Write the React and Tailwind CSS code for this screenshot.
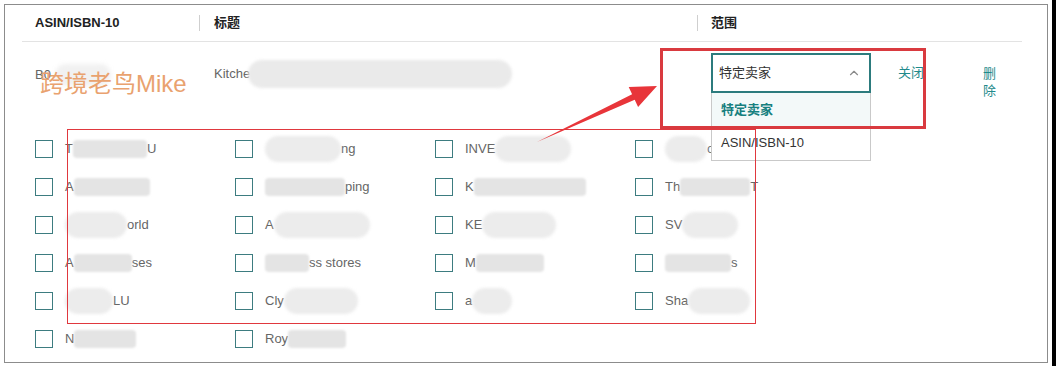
import { FiChevronUp } from 'react-icons/fi';

const FONT = "font-['Liberation_Sans','Noto_Sans_CJK_SC',sans-serif]";

// each cell: strings are visible text, numbers are smudged (blurred) widths, {w, r} = rounded smudge
const SELLERS = [
  ['T', 74, 'U'], [{ w: 76, r: true }, 'ng'], ['INVE', { w: 76, r: true }], [{ w: 42, r: true }, 'o'],
  ['A', 76], [80, 'ping'], ['K', 112], ['Th', 70, 'T'],
  [{ w: 62, r: true }, 'orld'], ['A', { w: 96, r: true }], ['KE', { w: 74, r: true }], ['SV', { w: 56, r: true }],
  ['A', 58, 'ses'], [44, 'ss stores'], ['M', 68], [66, 's'],
  [{ w: 48, r: true }, 'LU'], ['Cly', { w: 74, r: true }], ['a', { w: 40, r: true }], ['Sha', { w: 62, r: true }],
  ['N', 62], ['Roy', 58],
];

function Smudge({ w, round }) {
  return (
    <span
      className={
        round
          ? 'inline-block h-[26px] rounded-full bg-[#ececec] blur-[1.5px]'
          : 'inline-block h-[18px] rounded-sm bg-[#e4e4e4] blur-[1px]'
      }
      style={{ width: w }}
    />
  );
}

function SellerCell({ parts }) {
  return (
    <div className="flex items-center">
      <span className="w-[18px] h-[18px] border border-[#3d7c80] shrink-0" />
      <span className="ml-3 flex items-center text-[13px] text-[#666] whitespace-nowrap">
        {parts.map((p, i) =>
          typeof p === 'string' ? (
            <span key={i}>{p}</span>
          ) : typeof p === 'number' ? (
            <Smudge key={i} w={p} />
          ) : (
            <Smudge key={i} w={p.w} round={p.r} />
          )
        )}
      </span>
    </div>
  );
}

export default function App() {
  return (
    <div className={`relative w-[1056px] h-[366px] bg-black flex ${FONT}`}>
      <div className="w-[1052px] h-full bg-white pl-1 pt-1">
        <div className="w-[1044px] h-[359px] border border-[#8c8c8c]">
          {/* Header */}
          <div className="ml-[17px] mr-[25px] h-[37px] border-b border-[#e3e3e3] flex items-center text-[13px] font-bold text-[#222]">
            <div className="w-[177px] pl-[13px]">ASIN/ISBN-10</div>
            <div className="w-[498px] flex items-center">
              <span className="w-px h-4 bg-[#cfcfcf]" />
              <span className="ml-[14px]">标题</span>
            </div>
            <div className="flex-1 flex items-center">
              <span className="w-px h-4 bg-[#cfcfcf]" />
              <span className="ml-[13px]">范围</span>
            </div>
          </div>

          {/* Row */}
          <div className="ml-[17px] mr-[25px] h-[88px] flex items-start text-[13px] text-[#666]">
            <div className="w-[177px] pl-[13px] pt-[22px] flex items-center leading-4">
              <span>B0</span>
              <span className="ml-1 inline-block w-[56px] h-[22px] rounded-full bg-[#f1f1f1] blur-[2px]" />
            </div>
            <div className="w-[498px] pl-[15px] pt-[18px] flex items-center leading-4">
              <span>Kitche</span>
              <span className="-ml-[2px] inline-block w-[264px] h-[28px] rounded-full bg-[#eaeaea] blur-[1.5px]" />
            </div>
            <div className="flex-1 pl-[14px] pt-[11px] flex items-start">
              <div className="relative w-[160px]">
                <div className="h-[40px] border-2 border-[#2c7b7d] flex items-center justify-between pl-[6px] pr-[8px] text-[#333]">
                  <span>特定卖家</span>
                  <FiChevronUp className="text-[#8a8a8a] w-[14px] h-[14px]" />
                </div>
                <div className="absolute left-0 top-[40px] w-[160px] bg-white border-x border-b border-[#c9c9c9]">
                  <div className="h-[33px] bg-[#f3f9f9] flex items-center pl-[9px] font-bold text-[#17807f]">特定卖家</div>
                  <div className="h-[34px] flex items-center pl-[9px] text-[#333]">ASIN/ISBN-10</div>
                </div>
              </div>
              <span className="ml-[27px] mt-[12px] text-[#1f8a8b] leading-4">关闭</span>
              <span className="ml-[59px] mt-[12px] w-[13px] text-[#1f8a8b] leading-[17px]">删除</span>
            </div>
          </div>

          {/* Sellers */}
          <div className="pl-[30px] grid grid-cols-[repeat(4,200px)] auto-rows-[38px]">
            {SELLERS.map((parts, i) => (
              <SellerCell key={i} parts={parts} />
            ))}
          </div>
        </div>
      </div>

      {/* watermark */}
      <div className="absolute left-[40px] top-[70px] text-[24px] text-[#e9a26f] leading-7 whitespace-nowrap">
        跨境老鸟Mike
      </div>

      {/* annotations */}
      <div className="absolute left-[67px] top-[129px] w-[689px] h-[195px] border border-[#e0383e]" />
      <div className="absolute left-[660px] top-[48px] w-[266px] h-[81px] border-[3px] border-[#d93a3f]" />
      <svg className="absolute left-0 top-0" width="1056" height="366" viewBox="0 0 1056 366">
        <polygon
          points="537,142 632.1,94.3 628.7,87 657,86 638.1,107 634.7,99.7"
          fill="#e8353a"
        />
      </svg>
    </div>
  );
}
